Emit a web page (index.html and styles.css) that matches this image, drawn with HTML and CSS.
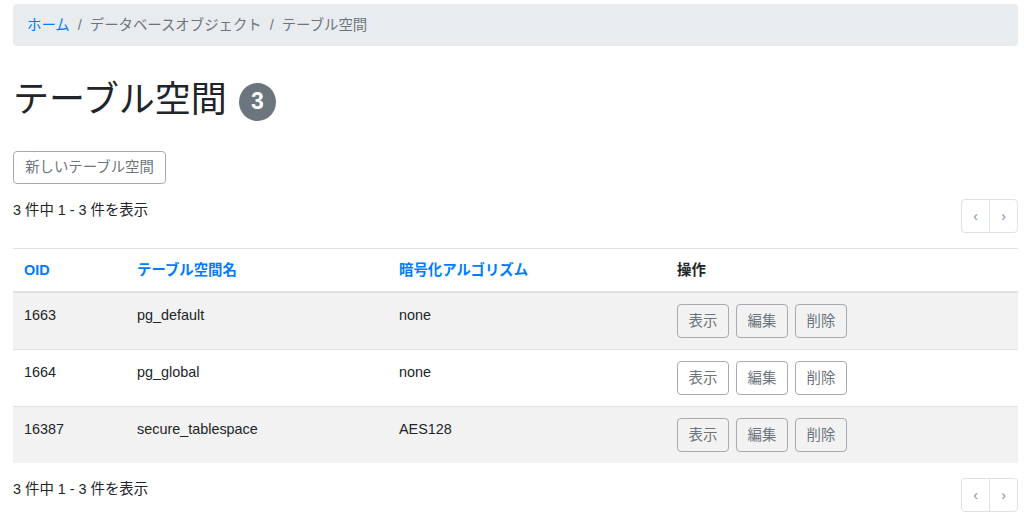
FILE: index.html
```html
<!DOCTYPE html>
<html lang="ja">
<head>
    <meta charset="UTF-8">
    <meta name="viewport" content="width=device-width, initial-scale=1.0">
    <title>テーブル空間</title>
    <link rel="stylesheet" href="styles.css">
</head>
<body>
    <nav class="breadcrumb">
        <a href="#">ホーム</a>
        <span class="sep">/</span>
        <span>データベースオブジェクト</span>
        <span class="sep">/</span>
        <span>テーブル空間</span>
    </nav>

    <h1>テーブル空間 <span class="badge">3</span></h1>

    <button class="btn btn-new">新しいテーブル空間</button>

    <div class="list-bar">
        <div class="count">3 件中 1 - 3 件を表示</div>
        <div class="pager">
            <a href="#">&lsaquo;</a>
            <a href="#">&rsaquo;</a>
        </div>
    </div>

    <table class="grid">
        <thead>
            <tr>
                <th class="col-oid"><a href="#">OID</a></th>
                <th class="col-name"><a href="#">テーブル空間名</a></th>
                <th class="col-enc"><a href="#">暗号化アルゴリズム</a></th>
                <th>操作</th>
            </tr>
        </thead>
        <tbody>
            <tr>
                <td>1663</td>
                <td>pg_default</td>
                <td>none</td>
                <td><div class="actions"><button class="btn">表示</button><button class="btn">編集</button><button class="btn">削除</button></div></td>
            </tr>
            <tr>
                <td>1664</td>
                <td>pg_global</td>
                <td>none</td>
                <td><div class="actions"><button class="btn">表示</button><button class="btn">編集</button><button class="btn">削除</button></div></td>
            </tr>
            <tr>
                <td>16387</td>
                <td>secure_tablespace</td>
                <td>AES128</td>
                <td><div class="actions"><button class="btn">表示</button><button class="btn">編集</button><button class="btn">削除</button></div></td>
            </tr>
        </tbody>
    </table>

    <div class="list-bar">
        <div class="count">3 件中 1 - 3 件を表示</div>
        <div class="pager">
            <a href="#">&lsaquo;</a>
            <a href="#">&rsaquo;</a>
        </div>
    </div>
</body>
</html>
```

FILE: styles.css
```css
body {
    font-family: "Liberation Sans", "Noto Sans CJK JP", sans-serif;
    font-size: 14.4px;
    line-height: 21px;
    color: #212529;
    margin: 0;
    padding: 4px 6px 0 13px;
}
a {
    color: #007bff;
    text-decoration: none;
}
.breadcrumb {
    display: flex;
    align-items: center;
    gap: 8px;
    height: 42px;
    padding: 0 14px;
    background-color: #e9ecef;
    border-radius: 4px;
    color: #6c757d;
    box-sizing: border-box;
}
h1 {
    display: flex;
    align-items: center;
    gap: 12px;
    font-size: 36px;
    font-weight: 400;
    line-height: 43px;
    margin: 32px 0 30px;
}
.badge {
    display: inline-flex;
    align-items: center;
    justify-content: center;
    width: 37px;
    height: 38px;
    margin-top: 4px;
    border-radius: 50%;
    background-color: #6c757d;
    color: #fff;
    font-size: 23px;
    font-weight: 700;
}
.btn {
    font-family: inherit;
    font-size: 14.4px;
    line-height: 21px;
    color: #6c757d;
    background: #fff;
    border: 1px solid #a5abb1;
    border-radius: 4px;
    padding: 6px 12px;
    cursor: pointer;
}
.btn-new {
    padding: 5px 0;
    width: 153px;
}
.list-bar {
    display: flex;
    justify-content: space-between;
    align-items: flex-start;
    margin-top: 15px;
}
.count {
    padding-top: 1px;
}
.pager {
    display: flex;
    border: 1px solid #dee2e6;
    border-radius: 4px;
}
.pager a {
    display: flex;
    align-items: center;
    justify-content: center;
    width: 27px;
    height: 32px;
    color: #7b8fa6;
    font-size: 14px;
}
.pager a + a {
    border-left: 1px solid #dee2e6;
}
.grid {
    width: 100%;
    border-collapse: collapse;
    table-layout: fixed;
    margin-top: 15px;
}
.grid th, .grid td {
    text-align: left;
    vertical-align: top;
    padding: 11px 11px;
    border-top: 1px solid #dee2e6;
}
.grid th {
    font-weight: 700;
    border-bottom: 2px solid #dee2e6;
    padding: 11px 11px 10px;
}
.col-oid { width: 91px; }
.col-name { width: 240px; }
.col-enc { width: 256px; }
.grid tbody td {
    padding-top: 12px;
}
.grid tbody tr:nth-child(odd) {
    background-color: #f2f2f2;
}
.actions {
    display: flex;
    gap: 7px;
    margin-top: -1px;
}
.actions .btn {
    width: 52px;
    height: 34px;
    padding: 0;
}
.grid tbody tr:nth-child(odd) .btn {
    background-color: #f2f2f2;
}
```
